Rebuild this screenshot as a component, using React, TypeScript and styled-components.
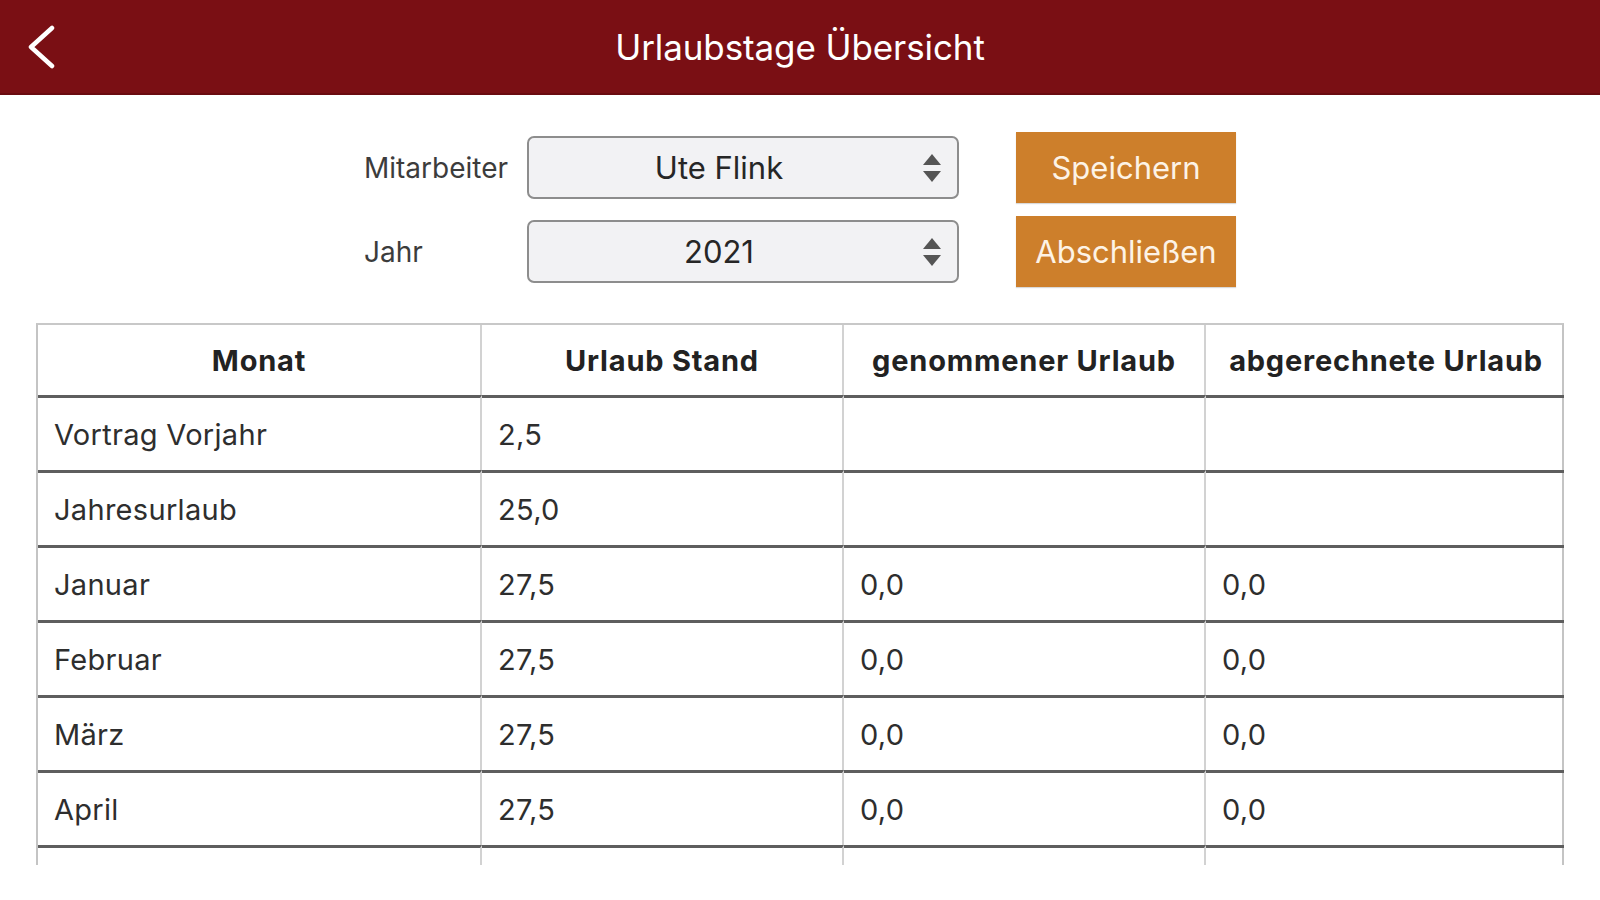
import styled, { createGlobalStyle } from "styled-components";

const GlobalStyle = createGlobalStyle`
  body {
    margin: 0;
    background: #ffffff;
    font-family: Inter, "Liberation Sans", sans-serif;
  }
`;

const rows = [
    {monat: "Vortrag Vorjahr", stand: "2,5", genommen: "", abgerechnet: ""},
    {monat: "Jahresurlaub", stand: "25,0", genommen: "", abgerechnet: ""},
    {monat: "Januar", stand: "27,5", genommen: "0,0", abgerechnet: "0,0"},
    {monat: "Februar", stand: "27,5", genommen: "0,0", abgerechnet: "0,0"},
    {monat: "März", stand: "27,5", genommen: "0,0", abgerechnet: "0,0"},
    {monat: "April", stand: "27,5", genommen: "0,0", abgerechnet: "0,0"},
    // next row only peeks in under the fold
    {monat: "", stand: "", genommen: "", abgerechnet: ""},
];

function SortArrows() {
    return (
        <svg width="22" height="32" viewBox="0 0 22 32">
            <path d="M11 2 L20 13 L2 13 Z" fill="#555"/>
            <path d="M11 30 L20 19 L2 19 Z" fill="#555"/>
        </svg>
    )
}

function App() {
    return (
        <Page>
            <GlobalStyle/>
            <Header>
                <BackButton>
                    <svg width="30" height="44" viewBox="0 0 30 44">
                        <polyline points="25,3 4,22 25,41" fill="none" stroke="#fff" strokeWidth="4.5"
                                  strokeLinecap="round" strokeLinejoin="round"/>
                    </svg>
                </BackButton>
                <Title>Urlaubstage Übersicht</Title>
                <span/>
            </Header>

            <Controls>
                <Label>Mitarbeiter</Label>
                <Select>
                    <SelectValue>Ute Flink</SelectValue>
                    <SortArrows/>
                </Select>
                <ActionButton>Speichern</ActionButton>

                <Label>Jahr</Label>
                <Select>
                    <SelectValue>2021</SelectValue>
                    <SortArrows/>
                </Select>
                <ActionButton>Abschließen</ActionButton>
            </Controls>

            <TableFrame>
                <Table>
                    <HeadCell>Monat</HeadCell>
                    <HeadCell>Urlaub Stand</HeadCell>
                    <HeadCell>genommener Urlaub</HeadCell>
                    <HeadCell $last>abgerechnete Urlaub</HeadCell>
                    {rows.map((r, i) => (
                        <Row key={i}>
                            <Cell>{r.monat}</Cell>
                            <Cell>{r.stand}</Cell>
                            <Cell>{r.genommen}</Cell>
                            <Cell $last>{r.abgerechnet}</Cell>
                        </Row>
                    ))}
                </Table>
            </TableFrame>
        </Page>
    )
}

const Page = styled.div`
  width: 1600px;
  height: 900px;
  overflow: hidden;
  background: #fff;
`;

const Header = styled.header`
  height: 95px;
  background: #7a0f14;
  border-bottom: 2px solid #6a0b10;
  box-sizing: border-box;
  display: grid;
  grid-template-columns: 1fr auto 1fr;
  align-items: center;
`;

const BackButton = styled.div`
  padding-left: 27px;
  display: flex;
  align-items: center;
`;

const Title = styled.h1`
  margin: 0;
  color: #fff;
  font-weight: 400;
  font-size: 35px;
  letter-spacing: -0.1px;
`;

const Controls = styled.div`
  margin: 37px auto 0;
  width: fit-content;
  display: grid;
  grid-template-columns: 163px 432px 277px;
  grid-auto-rows: 71px;
  row-gap: 13px;
  align-items: center;
`;

const Label = styled.div`
  font-size: 28px;
  color: #3c3c3c;
`;

const Select = styled.div`
  height: 63px;
  box-sizing: border-box;
  border: 2px solid #8d8d8d;
  border-radius: 7px;
  background: #f2f2f4;
  display: flex;
  align-items: center;
  gap: 20px;
  padding: 0 14px 0 8px;
`;

const SelectValue = styled.div`
  flex: 1;
  text-align: center;
  font-size: 31px;
  color: #262626;
`;

const ActionButton = styled.button`
  justify-self: end;
  width: 220px;
  height: 71px;
  border: none;
  background: #cd7f2b;
  color: #fdf3e6;
  font-family: inherit;
  font-size: 31px;
  padding: 0;
  box-shadow: 0 1px 1px rgba(0, 0, 0, 0.15);
`;

const TableFrame = styled.div`
  margin: 36px 36px 0;
  height: 542px;
  overflow: hidden;
`;

const Table = styled.div`
  display: grid;
  grid-template-columns: 444px 362px 362px 360px;
  border-left: 2px solid #c4c4c4;
  border-right: 2px solid #c4c4c4;
  border-top: 2px solid #c8c8c8;
`;

const HeadCell = styled.div<{ $last?: boolean }>`
  height: 70px;
  display: flex;
  align-items: center;
  justify-content: center;
  font-weight: 700;
  font-size: 29px;
  letter-spacing: 0.8px;
  color: #222;
  border-right: ${p => p.$last ? "none" : "2px solid #d2d2d2"};
`;

const Row = styled.div`
  display: contents;
`;

const Cell = styled.div<{ $last?: boolean }>`
  height: 72px;
  display: flex;
  align-items: center;
  padding-left: 16px;
  font-size: 29px;
  letter-spacing: 0.3px;
  color: #2e2e2e;
  border-top: 3.5px solid #5e5e5e;
  border-right: ${p => p.$last ? "none" : "2px solid #d2d2d2"};
`;

export default App
